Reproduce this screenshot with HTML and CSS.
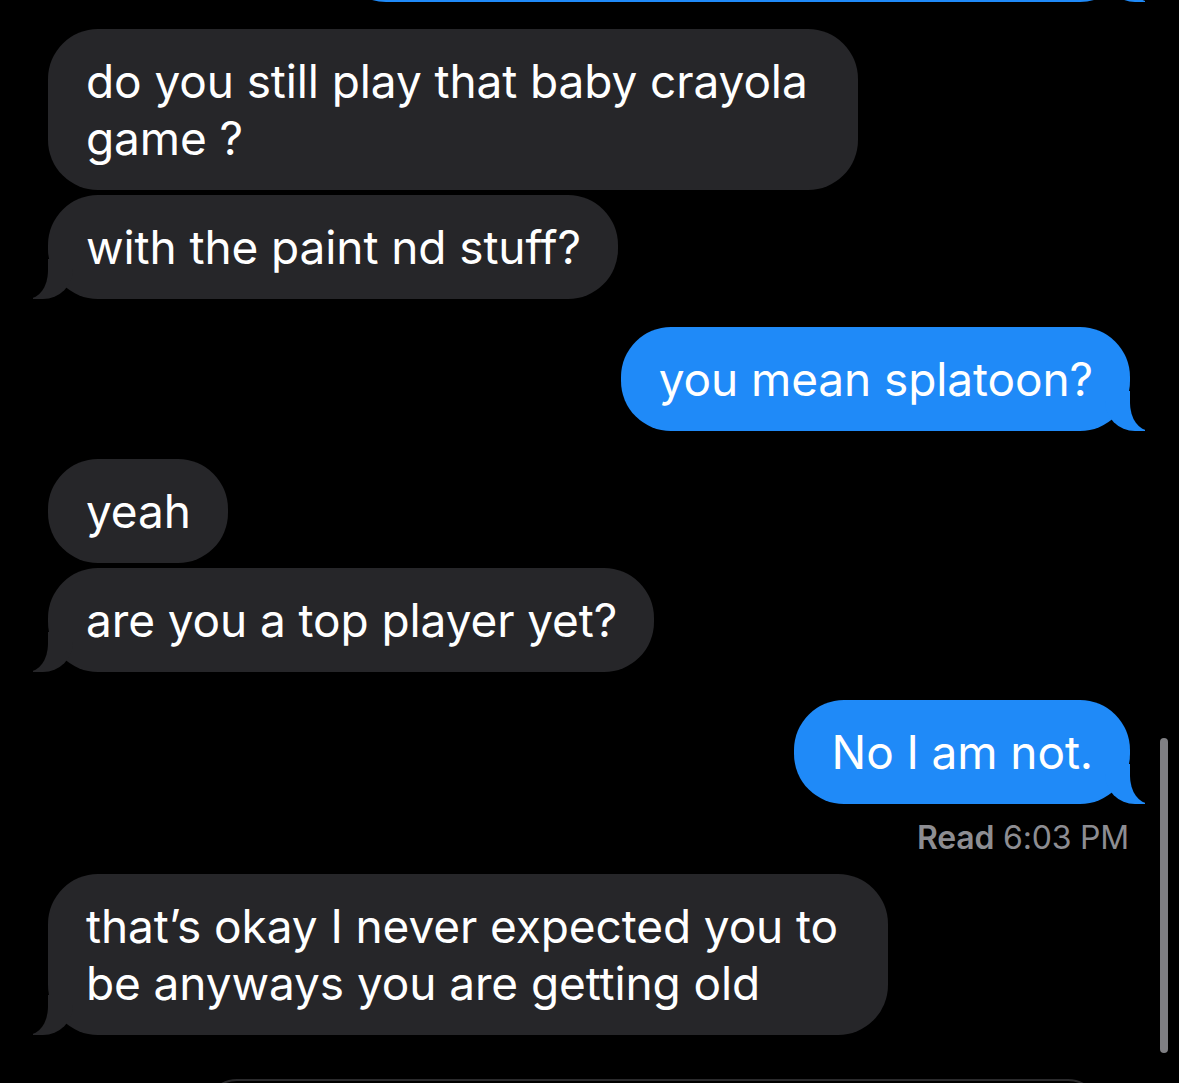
FILE: index.html
```html
<!DOCTYPE html>
<html lang="en">
<head>
  <meta charset="UTF-8" />
  <meta name="viewport" content="width=device-width, initial-scale=1.0" />
  <title>Messages</title>
  <link rel="stylesheet" href="styles.css">
</head>
<body>
  <div class="thread">
    <div class="msg me tail earlier"></div>

    <div class="msg them multi">do you still play that baby crayola<br>game ?</div>
    <div class="msg them tail">with the paint nd stuff?</div>

    <div class="msg me tail group">you mean splatoon?</div>

    <div class="msg them group">yeah</div>
    <div class="msg them tail">are you a top player yet?</div>

    <div class="msg me tail group">No I am not.</div>
    <div class="receipt"><b>Read</b> 6:03 PM</div>

    <div class="msg them tail multi last">that’s okay I never expected you to<br>be anyways you are getting old</div>

    <div class="compose"></div>
  </div>

  <div class="scrollbar"></div>
</body>
</html>
```

FILE: styles.css
```css
body {
  margin: 0;
  background: #000;
  color: #fff;
  font-family: 'Inter', 'Noto Sans', sans-serif;
  height: 1083px;
  overflow: hidden;
  position: relative;
}

.thread {
  display: flex;
  flex-direction: column;
  padding: 0 49px 0 48px;
}

.msg {
  position: relative;
  max-width: 860px;
  padding: 23.5px 37px 23.5px 38px;
  border-radius: 50px;
  font-size: 46px;
  line-height: 57px;
  letter-spacing: -0.1px;
  margin-top: 5px;
}

.msg.group {
  margin-top: 28px;
}

.msg.multi {
  padding-right: 50px;
}

.them {
  align-self: flex-start;
  background: #262629;
}

.me {
  align-self: flex-end;
  background: #1f8af8;
}

/* the bubble cut off at the top of the screen */
.msg.earlier {
  width: 794px;
  height: 104px;
  padding: 0;
  margin-top: -102px;
  box-sizing: border-box;
}

.msg.earlier + .msg {
  margin-top: 27px;
}

/* tails */
.tail::before,
.tail::after {
  content: "";
  position: absolute;
  bottom: 0;
  height: 40px;
}

.them.tail::before {
  left: -15px;
  width: 40px;
  background: #262629;
  border-bottom-right-radius: 30px;
}

.them.tail::after {
  left: -40px;
  width: 40px;
  background: #000;
  border-bottom-right-radius: 20px 28px;
}

.me.tail::before {
  right: -15px;
  width: 40px;
  background: #1f8af8;
  border-bottom-left-radius: 30px;
}

.me.tail::after {
  right: -40px;
  width: 40px;
  background: #000;
  border-bottom-left-radius: 20px 28px;
}

.receipt {
  align-self: flex-end;
  margin-top: 14px;
  margin-right: 1px;
  font-size: 32px;
  line-height: 40px;
  letter-spacing: -0.2px;
  color: #8d8d92;
}

.receipt b {
  font-weight: 600;
}

.msg.last {
  margin-top: 16px;
}

.compose {
  margin: 44px 30px 0 157px;
  height: 60px;
  border: 2px solid #2a2a2c;
  border-radius: 40px;
}

.scrollbar {
  position: absolute;
  top: 738px;
  left: 1160px;
  width: 8px;
  height: 315px;
  border-radius: 4px;
  background: #7f7f83;
}
```
